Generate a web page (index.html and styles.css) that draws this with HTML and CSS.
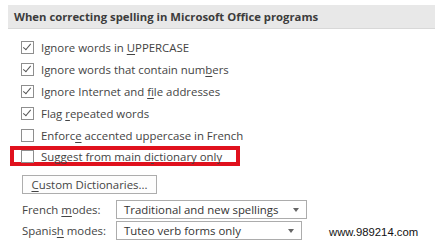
FILE: index.html
```html
<!DOCTYPE html>
<html lang="en">
<head>
  <meta charset="UTF-8">
  <title>Proofing options</title>
  <link rel="stylesheet" href="styles.css">
</head>
<body>

<div class="panel">
  <div class="section-title">When correcting spelling in Microsoft Office programs</div>

  <div class="options">
    <div class="row"><span class="box checked"></span><span>Ignore words in <u>U</u>PPERCASE</span></div>
    <div class="row"><span class="box checked"></span><span>Ignore words that contain num<u>b</u>ers</span></div>
    <div class="row"><span class="box checked"></span><span>Ignore Internet and <u>f</u>ile addresses</span></div>
    <div class="row"><span class="box checked"></span><span>Flag <u>r</u>epeated words</span></div>
    <div class="row"><span class="box"></span><span>Enforc<u>e</u> accented uppercase in French</span></div>
    <div class="row marked"><span class="box"></span><span>Suggest from main d<u>i</u>ctionary only</span></div>
  </div>

  <button class="dict-btn"><u>C</u>ustom Dictionaries...</button>

  <div class="modes">
    <div class="mode-row">
      <span class="mode-label">French <u>m</u>odes:</span>
      <div class="select wide">Traditional and new spellings<span class="caret"></span></div>
    </div>
    <div class="mode-row">
      <span class="mode-label">Spanis<u>h</u> modes:</span>
      <div class="select">Tuteo verb forms only<span class="caret"></span></div>
    </div>
  </div>
</div>

<div class="watermark">www.989214.com</div>

</body>
</html>
```

FILE: styles.css
```css
body {
  margin: 0;
  background: #fff;
  font-family: "Open Sans", "Noto Sans", Arial, sans-serif;
  font-size: 11.4px;
  color: #444;
}

u {
  text-decoration-thickness: 1px;
  text-underline-offset: 2px;
}

.panel {
  padding: 5px 0 0 8px;
}

.section-title {
  height: 23px;
  line-height: 23px;
  padding-left: 6px;
  background: #e8e8e8;
  border-bottom: 1px solid #d8d8d8;
  font-weight: bold;
  font-size: 11.3px;
  color: #3c3c3c;
}

.options {
  margin-top: 7px;
  padding-left: 13px;
}

.row {
  display: flex;
  align-items: center;
  height: 22px;
}

.box {
  width: 11px;
  height: 11px;
  border: 1px solid #8e8e8e;
  background: #fff;
  margin-right: 7px;
  position: relative;
  flex: none;
}

.box.checked::after {
  content: "";
  position: absolute;
  left: 3px;
  top: 0px;
  width: 3px;
  height: 7px;
  border: solid #555;
  border-width: 0 1.5px 1.5px 0;
  transform: rotate(40deg);
}

.row.marked {
  height: 20px;
  width: 219px;
  margin-left: -11px;
  padding-left: 11px;
  margin-bottom: 2px;
  box-shadow: inset 0 0 0 4px #e0111d;
}

.dict-btn {
  display: block;
  margin: 9px 0 0 14px;
  width: 135px;
  height: 19px;
  padding: 0;
  border: 1px solid #adadad;
  background: #fdfdfd;
  font-family: inherit;
  font-size: 11.4px;
  color: #444;
}

.modes {
  margin-top: 6px;
  padding-left: 14px;
}

.mode-row {
  display: flex;
  align-items: center;
  margin-bottom: 2px;
}

.mode-label {
  width: 94px;
}

.select {
  position: relative;
  width: 177px;
  height: 17px;
  line-height: 17px;
  padding-left: 7px;
  border: 1px solid #acacac;
  background: #fff;
  color: #333;
}

.select.wide {
  width: 182px;
}

.caret {
  position: absolute;
  right: 7px;
  top: 7px;
  border-left: 3px solid transparent;
  border-right: 3px solid transparent;
  border-top: 4px solid #666;
}

.watermark {
  position: absolute;
  left: 329px;
  top: 226px;
  font-family: Arial, "Liberation Sans", sans-serif;
  font-size: 11.3px;
  color: #111;
}
```
